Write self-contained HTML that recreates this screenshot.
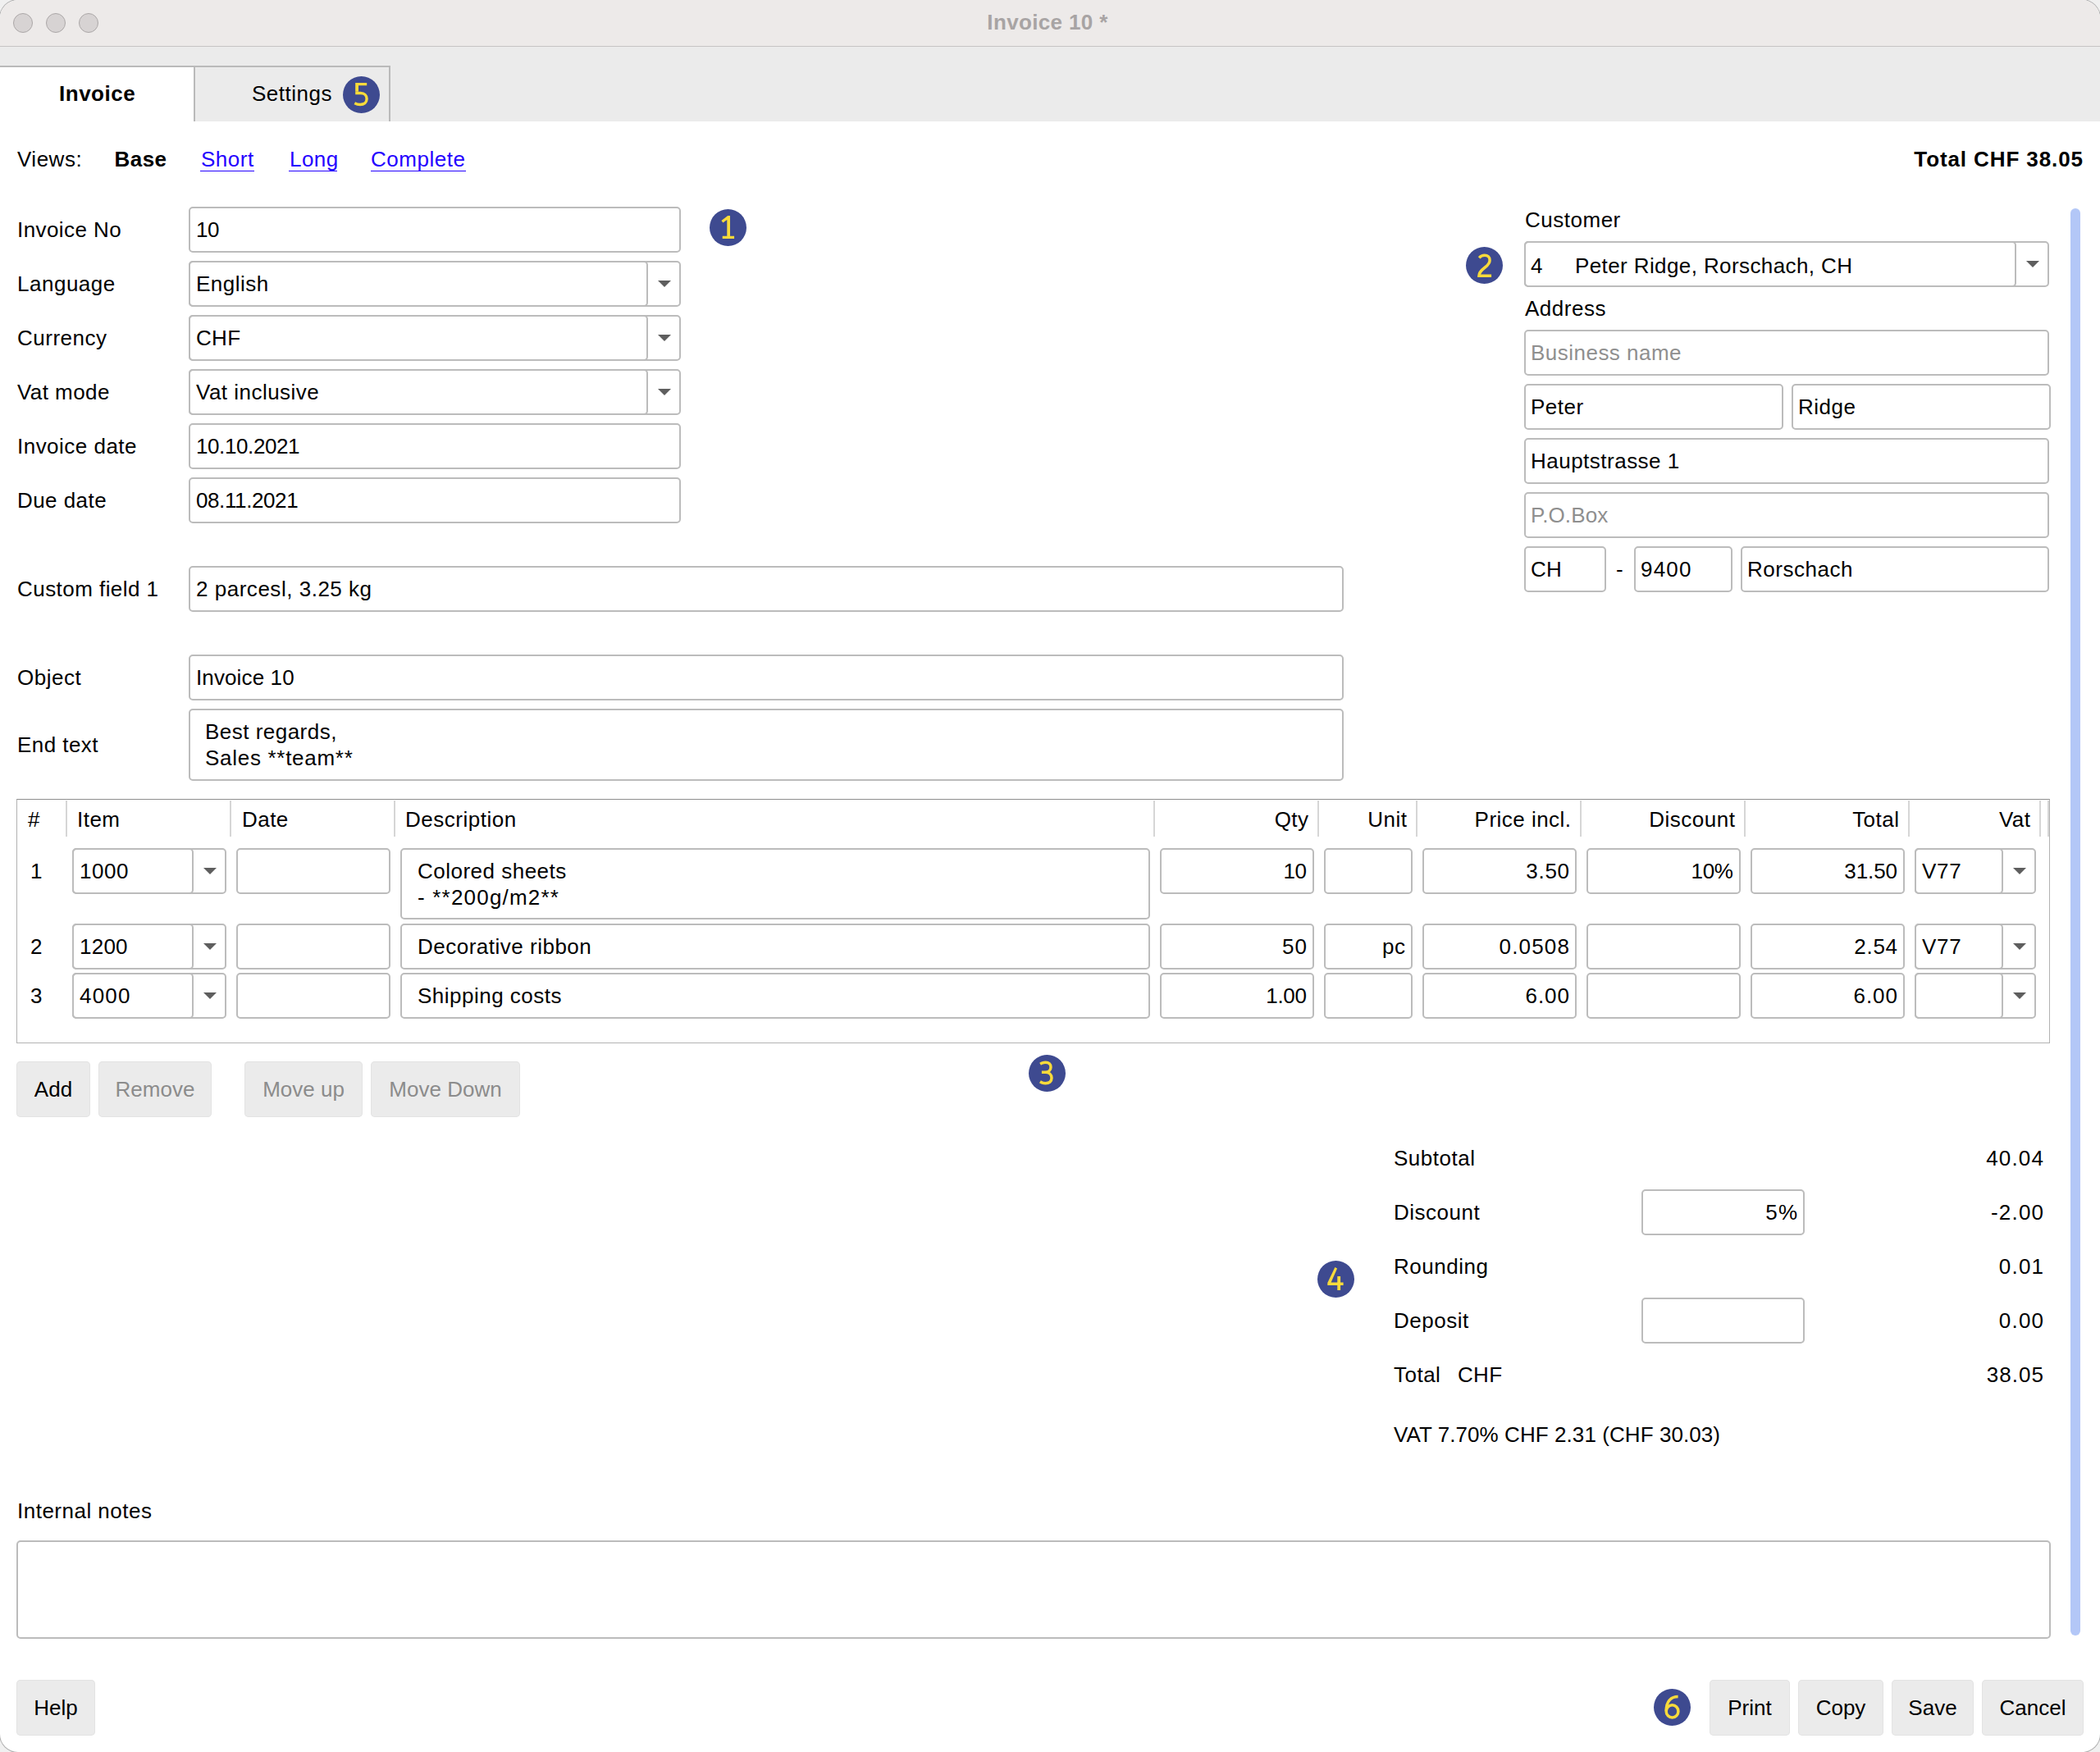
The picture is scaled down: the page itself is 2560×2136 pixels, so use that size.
<!DOCTYPE html>
<html><head><meta charset="utf-8"><style>
html,body{margin:0;padding:0;width:2560px;height:2136px;overflow:hidden;background:#f0f0f0;}
body{font-family:"Liberation Sans",sans-serif;font-size:26px;color:#000;position:relative;}
#win{position:absolute;left:0;top:0;width:2560px;height:2136px;background:#fff;border-radius:22px;overflow:hidden;box-shadow:0 0 0 1px #b0b0b0;}
.t{position:absolute;white-space:pre;}
.inp{position:absolute;box-sizing:border-box;border:2px solid #bcbcbc;border-radius:5px;background:#fff;}
.btn{position:absolute;box-sizing:border-box;background:#ebebeb;border-radius:5px;box-shadow:inset 0 0 0 1px #e3e3e3;}
.vl{position:absolute;width:2px;background:#b9b9b9;}
.arr{position:absolute;width:0;height:0;border-left:8px solid transparent;border-right:8px solid transparent;border-top:8px solid #5e5e5e;}
.mk{position:absolute;width:45px;height:45px;}
.mk svg{display:block;}
#titlebar{position:absolute;left:0;top:0;width:2560px;height:56px;background:#edeae9;border-bottom:1px solid #c6c4c4;}
.tl{position:absolute;width:22px;height:22px;border-radius:50%;background:#d7d3d3;border:1px solid #aba7a7;}
#tabbar{position:absolute;left:0;top:57px;width:2560px;height:91px;background:#ebebeb;}
#tabsel{position:absolute;left:0;top:80px;width:237px;height:68px;background:#fff;border-top:2px solid #bababa;box-sizing:border-box;}
#tab2{position:absolute;left:236px;top:80px;width:240px;height:68px;background:#ebebeb;border:2px solid #bababa;border-bottom:none;box-sizing:border-box;}
#sb{position:absolute;left:2524px;top:254px;width:12px;height:1740px;border-radius:6px;background:#b3c7f7;}
#tbl{position:absolute;left:20px;top:974px;width:2479px;height:298px;box-sizing:border-box;border:1px solid #b2b2b2;border-top-color:#8e8e8e;}
.hs{position:absolute;top:976px;width:2px;height:44px;background:#d6d6d6;}
</style></head><body><div id="win">
<div id="titlebar"></div>
<div class="tl" style="left:16px;top:16px"></div>
<div class="tl" style="left:56px;top:16px"></div>
<div class="tl" style="left:96px;top:16px"></div>
<div class="t" style="left:-3px;width:2560px;text-align:center;top:12px;line-height:30px;font-weight:bold;color:#a8a4a4;letter-spacing:0.35px">Invoice 10 *</div>
<div id="tabbar"></div>
<div id="tabsel"></div>
<div id="tab2"></div>
<div class="t" style="left:72px;top:99.49px;line-height:31px;font-weight:bold;letter-spacing:0.51px;">Invoice</div>
<div class="t" style="left:307px;top:99.49px;line-height:31px;letter-spacing:0.51px;">Settings</div>
<div class="mk" style="left:418.0px;top:93.0px"><svg width="45" height="45" viewBox="0 0 45 45"><circle cx="22.5" cy="22.5" r="22.5" fill="#3e4a90"/><path fill="#f8da3b" d="M15.2 8 H29.2 V11.2 H19 V18.8 H15.2 Z"/><path fill="none" stroke="#f8da3b" stroke-width="3.4" d="M15.2 20.45 H21.5 C26.2 20.45 29.1 23.5 29.1 27.6 C29.1 31.8 25.8 34.5 21.1 34.5 C18.4 34.5 16.2 33.8 14.3 32.8"/></svg></div>
<div class="t" style="left:21px;top:178.99px;line-height:31px;letter-spacing:0.50px;">Views:</div>
<div class="t" style="left:139.5px;top:178.99px;line-height:31px;font-weight:bold;letter-spacing:0.47px;">Base</div>
<div class="t" style="left:245px;top:178.99px;line-height:31px;color:#2400ff;letter-spacing:0.49px;">Short</div>
<div class="t" style="left:353px;top:178.99px;line-height:31px;color:#2400ff;letter-spacing:0.47px;">Long</div>
<div class="t" style="left:452px;top:178.99px;line-height:31px;color:#2400ff;letter-spacing:0.51px;">Complete</div>
<div style="position:absolute;left:244px;top:208px;width:66px;height:1px;background:#2400ff"></div>
<div style="position:absolute;left:352px;top:208px;width:59px;height:1px;background:#2400ff"></div>
<div style="position:absolute;left:452px;top:208px;width:116px;height:1px;background:#2400ff"></div>
<div class="t" style="right:20.10px;top:179.49px;line-height:31px;font-weight:bold;letter-spacing:0.90px;">Total CHF 38.05</div>
<div class="inp" style="left:230px;top:252px;width:600px;height:56px;"></div>
<div class="t" style="left:21px;top:265.49px;line-height:31px;letter-spacing:0.43px;">Invoice No</div>
<div class="t" style="left:239px;top:265.49px;line-height:31px;letter-spacing:-0.50px;">10</div>
<div class="inp" style="left:230px;top:318px;width:600px;height:56px;"></div>
<div class="inp" style="left:230px;top:318px;width:560px;height:56px;background:transparent;"></div>
<div class="arr" style="left:802px;top:342px"></div>
<div class="t" style="left:21px;top:331.49px;line-height:31px;letter-spacing:0.51px;">Language</div>
<div class="t" style="left:239px;top:331.49px;line-height:31px;letter-spacing:0.51px;">English</div>
<div class="inp" style="left:230px;top:384px;width:600px;height:56px;"></div>
<div class="inp" style="left:230px;top:384px;width:560px;height:56px;background:transparent;"></div>
<div class="arr" style="left:802px;top:408px"></div>
<div class="t" style="left:21px;top:397.49px;line-height:31px;letter-spacing:0.51px;">Currency</div>
<div class="t" style="left:239px;top:397.49px;line-height:31px;letter-spacing:0.30px;">CHF</div>
<div class="inp" style="left:230px;top:450px;width:600px;height:56px;"></div>
<div class="inp" style="left:230px;top:450px;width:560px;height:56px;background:transparent;"></div>
<div class="arr" style="left:802px;top:474px"></div>
<div class="t" style="left:21px;top:463.49px;line-height:31px;letter-spacing:0.44px;">Vat mode</div>
<div class="t" style="left:239px;top:463.49px;line-height:31px;letter-spacing:0.48px;">Vat inclusive</div>
<div class="inp" style="left:230px;top:516px;width:600px;height:56px;"></div>
<div class="t" style="left:21px;top:529.49px;line-height:31px;letter-spacing:0.48px;">Invoice date</div>
<div class="t" style="left:239px;top:529.49px;line-height:31px;letter-spacing:-0.40px;">10.10.2021</div>
<div class="inp" style="left:230px;top:582px;width:600px;height:56px;"></div>
<div class="t" style="left:21px;top:595.49px;line-height:31px;letter-spacing:0.44px;">Due date</div>
<div class="t" style="left:239px;top:595.49px;line-height:31px;letter-spacing:-0.40px;">08.11.2021</div>
<div class="mk" style="left:865.0px;top:255.0px"><svg width="45" height="45" viewBox="0 0 45 45"><circle cx="22.5" cy="22.5" r="22.5" fill="#3e4a90"/><path fill="#f8da3b" d="M14.4 13.9 L22.2 8 H25 V32.8 H30.05 V36 H15.7 V32.8 H21.3 V12.9 L16.4 16.6 Z"/></svg></div>
<div class="inp" style="left:230px;top:690px;width:1408px;height:56px;"></div>
<div class="t" style="left:21px;top:703.49px;line-height:31px;letter-spacing:0.45px;">Custom field 1</div>
<div class="t" style="left:239px;top:703.49px;line-height:31px;letter-spacing:0.52px;">2 parcesl, 3.25 kg</div>
<div class="inp" style="left:230px;top:798px;width:1408px;height:56px;"></div>
<div class="t" style="left:21px;top:811.49px;line-height:31px;letter-spacing:0.50px;">Object</div>
<div class="t" style="left:239px;top:811.49px;line-height:31px;letter-spacing:0.12px;">Invoice 10</div>
<div class="inp" style="left:230px;top:864px;width:1408px;height:88px;"></div>
<div class="t" style="left:21px;top:893.49px;line-height:31px;letter-spacing:0.44px;">End text</div>
<div class="t" style="left:250px;top:877.49px;line-height:31px;letter-spacing:0.48px;">Best regards,</div>
<div class="t" style="left:250px;top:909.49px;line-height:31px;letter-spacing:0.71px;">Sales **team**</div>
<div class="t" style="left:1859px;top:253.49px;line-height:31px;letter-spacing:0.51px;">Customer</div>
<div class="inp" style="left:1858px;top:294px;width:640px;height:56px;"></div>
<div class="inp" style="left:1858px;top:294px;width:600px;height:56px;background:transparent;"></div>
<div class="arr" style="left:2470px;top:318px"></div>
<div class="t" style="left:1866px;top:309.49px;line-height:31px;">4</div>
<div class="t" style="left:1920px;top:309.49px;line-height:31px;letter-spacing:0.40px;">Peter Ridge, Rorschach, CH</div>
<div class="mk" style="left:1786.5px;top:300.5px"><svg width="45" height="45" viewBox="0 0 45 45"><circle cx="22.5" cy="22.5" r="22.5" fill="#3e4a90"/><path fill="none" stroke="#f8da3b" stroke-width="3.5" stroke-linejoin="miter" d="M16.2 13.4 C18 11.3 20.2 10.3 22.8 10.3 C26.6 10.3 29.1 12.6 29.1 16.2 C29.1 19.6 27.2 22 23.3 25 C18.6 28.6 15.9 31.2 15.9 35.3 H31.1"/></svg></div>
<div class="t" style="left:1859px;top:360.99px;line-height:31px;letter-spacing:0.51px;">Address</div>
<div class="inp" style="left:1858px;top:402px;width:640px;height:56px;"></div>
<div class="t" style="left:1866px;top:415.49px;line-height:31px;color:#8f8f8f;letter-spacing:0.48px;">Business name</div>
<div class="inp" style="left:1858px;top:468px;width:316px;height:56px;"></div>
<div class="t" style="left:1866px;top:481.49px;line-height:31px;letter-spacing:0.49px;">Peter</div>
<div class="inp" style="left:2184px;top:468px;width:316px;height:56px;"></div>
<div class="t" style="left:2192px;top:481.49px;line-height:31px;letter-spacing:0.49px;">Ridge</div>
<div class="inp" style="left:1858px;top:534px;width:640px;height:56px;"></div>
<div class="t" style="left:1866px;top:547.49px;line-height:31px;letter-spacing:0.49px;">Hauptstrasse 1</div>
<div class="inp" style="left:1858px;top:600px;width:640px;height:56px;"></div>
<div class="t" style="left:1866px;top:613.49px;line-height:31px;color:#8f8f8f;letter-spacing:0.14px;">P.O.Box</div>
<div class="inp" style="left:1858px;top:666px;width:100px;height:56px;"></div>
<div class="t" style="left:1866px;top:679.49px;line-height:31px;letter-spacing:0.30px;">CH</div>
<div class="t" style="left:1970px;top:679.49px;line-height:31px;">-</div>
<div class="inp" style="left:1992px;top:666px;width:120px;height:56px;"></div>
<div class="t" style="left:2000px;top:679.49px;line-height:31px;letter-spacing:1.20px;">9400</div>
<div class="inp" style="left:2122px;top:666px;width:376px;height:56px;"></div>
<div class="t" style="left:2130px;top:679.49px;line-height:31px;letter-spacing:0.52px;">Rorschach</div>
<div id="sb"></div>
<div id="tbl"></div>
<div class="hs" style="left:80px"></div>
<div class="hs" style="left:280px"></div>
<div class="hs" style="left:480px"></div>
<div class="hs" style="left:1406px"></div>
<div class="hs" style="left:1606px"></div>
<div class="hs" style="left:1726px"></div>
<div class="hs" style="left:1926px"></div>
<div class="hs" style="left:2126px"></div>
<div class="hs" style="left:2326px"></div>
<div class="hs" style="left:2486px"></div>
<div class="hs" style="left:2496px"></div>
<div class="t" style="left:34px;top:984.49px;line-height:31px;">#</div>
<div class="t" style="left:94px;top:984.49px;line-height:31px;letter-spacing:0.47px;">Item</div>
<div class="t" style="left:295px;top:984.49px;line-height:31px;letter-spacing:0.47px;">Date</div>
<div class="t" style="left:494px;top:984.49px;line-height:31px;letter-spacing:0.52px;">Description</div>
<div class="t" style="right:964.58px;top:984.49px;line-height:31px;letter-spacing:0.43px;">Qty</div>
<div class="t" style="right:844.53px;top:984.49px;line-height:31px;letter-spacing:0.47px;">Unit</div>
<div class="t" style="right:644.53px;top:984.49px;line-height:31px;letter-spacing:0.47px;">Price incl.</div>
<div class="t" style="right:444.49px;top:984.49px;line-height:31px;letter-spacing:0.51px;">Discount</div>
<div class="t" style="right:244.51px;top:984.49px;line-height:31px;letter-spacing:0.49px;">Total</div>
<div class="t" style="right:84.58px;top:984.49px;line-height:31px;letter-spacing:0.43px;">Vat</div>
<div class="t" style="left:37px;top:1047.49px;line-height:31px;">1</div>
<div class="inp" style="left:88px;top:1034px;width:188px;height:56px;"></div>
<div class="inp" style="left:88px;top:1034px;width:148px;height:56px;background:transparent;"></div>
<div class="arr" style="left:248px;top:1058px"></div>
<div class="t" style="left:97px;top:1047.49px;line-height:31px;letter-spacing:0.50px;">1000</div>
<div class="inp" style="left:288px;top:1034px;width:188px;height:56px;"></div>
<div class="inp" style="left:488px;top:1034px;width:914px;height:87px;"></div>
<div class="t" style="left:509px;top:1047.49px;line-height:31px;letter-spacing:0.49px;">Colored sheets</div>
<div class="t" style="left:509px;top:1078.99px;line-height:31px;letter-spacing:1.20px;">- **200g/m2**</div>
<div class="inp" style="left:1414px;top:1034px;width:188px;height:56px;"></div>
<div class="t" style="right:967.50px;top:1047.49px;line-height:31px;letter-spacing:-0.50px;">10</div>
<div class="inp" style="left:1614px;top:1034px;width:108px;height:56px;"></div>
<div class="t" style="right:847.00px;top:1047.49px;line-height:31px;"></div>
<div class="inp" style="left:1734px;top:1034px;width:188px;height:56px;"></div>
<div class="t" style="right:646.30px;top:1047.49px;line-height:31px;letter-spacing:0.70px;">3.50</div>
<div class="inp" style="left:1934px;top:1034px;width:188px;height:56px;"></div>
<div class="t" style="right:447.25px;top:1047.49px;line-height:31px;letter-spacing:-0.25px;">10%</div>
<div class="inp" style="left:2134px;top:1034px;width:188px;height:56px;"></div>
<div class="t" style="right:247.10px;top:1047.49px;line-height:31px;letter-spacing:-0.10px;">31.50</div>
<div class="inp" style="left:2334px;top:1034px;width:148px;height:56px;"></div>
<div class="inp" style="left:2334px;top:1034px;width:108px;height:56px;background:transparent;"></div>
<div class="arr" style="left:2454px;top:1058px"></div>
<div class="t" style="left:2343px;top:1047.49px;line-height:31px;letter-spacing:0.75px;">V77</div>
<div class="t" style="left:37px;top:1139.49px;line-height:31px;">2</div>
<div class="inp" style="left:88px;top:1126px;width:188px;height:56px;"></div>
<div class="inp" style="left:88px;top:1126px;width:148px;height:56px;background:transparent;"></div>
<div class="arr" style="left:248px;top:1150px"></div>
<div class="t" style="left:97px;top:1139.49px;line-height:31px;letter-spacing:0.23px;">1200</div>
<div class="inp" style="left:288px;top:1126px;width:188px;height:56px;"></div>
<div class="inp" style="left:488px;top:1126px;width:914px;height:56px;"></div>
<div class="t" style="left:509px;top:1139.49px;line-height:31px;letter-spacing:0.50px;">Decorative ribbon</div>
<div class="inp" style="left:1414px;top:1126px;width:188px;height:56px;"></div>
<div class="t" style="right:965.80px;top:1139.49px;line-height:31px;letter-spacing:1.20px;">50</div>
<div class="inp" style="left:1614px;top:1126px;width:108px;height:56px;"></div>
<div class="t" style="right:846.45px;top:1139.49px;line-height:31px;letter-spacing:0.55px;">pc</div>
<div class="inp" style="left:1734px;top:1126px;width:188px;height:56px;"></div>
<div class="t" style="right:645.80px;top:1139.49px;line-height:31px;letter-spacing:1.20px;">0.0508</div>
<div class="inp" style="left:1934px;top:1126px;width:188px;height:56px;"></div>
<div class="t" style="right:447.00px;top:1139.49px;line-height:31px;"></div>
<div class="inp" style="left:2134px;top:1126px;width:188px;height:56px;"></div>
<div class="t" style="right:246.30px;top:1139.49px;line-height:31px;letter-spacing:0.70px;">2.54</div>
<div class="inp" style="left:2334px;top:1126px;width:148px;height:56px;"></div>
<div class="inp" style="left:2334px;top:1126px;width:108px;height:56px;background:transparent;"></div>
<div class="arr" style="left:2454px;top:1150px"></div>
<div class="t" style="left:2343px;top:1139.49px;line-height:31px;letter-spacing:0.75px;">V77</div>
<div class="t" style="left:37px;top:1199.49px;line-height:31px;">3</div>
<div class="inp" style="left:88px;top:1186px;width:188px;height:56px;"></div>
<div class="inp" style="left:88px;top:1186px;width:148px;height:56px;background:transparent;"></div>
<div class="arr" style="left:248px;top:1210px"></div>
<div class="t" style="left:97px;top:1199.49px;line-height:31px;letter-spacing:1.20px;">4000</div>
<div class="inp" style="left:288px;top:1186px;width:188px;height:56px;"></div>
<div class="inp" style="left:488px;top:1186px;width:914px;height:56px;"></div>
<div class="t" style="left:509px;top:1199.49px;line-height:31px;letter-spacing:0.49px;">Shipping costs</div>
<div class="inp" style="left:1414px;top:1186px;width:188px;height:56px;"></div>
<div class="t" style="right:967.27px;top:1199.49px;line-height:31px;letter-spacing:-0.27px;">1.00</div>
<div class="inp" style="left:1614px;top:1186px;width:108px;height:56px;"></div>
<div class="t" style="right:847.00px;top:1199.49px;line-height:31px;"></div>
<div class="inp" style="left:1734px;top:1186px;width:188px;height:56px;"></div>
<div class="t" style="right:646.03px;top:1199.49px;line-height:31px;letter-spacing:0.97px;">6.00</div>
<div class="inp" style="left:1934px;top:1186px;width:188px;height:56px;"></div>
<div class="t" style="right:447.00px;top:1199.49px;line-height:31px;"></div>
<div class="inp" style="left:2134px;top:1186px;width:188px;height:56px;"></div>
<div class="t" style="right:246.03px;top:1199.49px;line-height:31px;letter-spacing:0.97px;">6.00</div>
<div class="inp" style="left:2334px;top:1186px;width:148px;height:56px;"></div>
<div class="inp" style="left:2334px;top:1186px;width:108px;height:56px;background:transparent;"></div>
<div class="arr" style="left:2454px;top:1210px"></div>
<div class="t" style="left:2343px;top:1199.49px;line-height:31px;"></div>
<div class="btn" style="left:20px;top:1294px;width:90px;height:68px;"></div>
<div class="t" style="left:20px;width:90px;text-align:center;top:1312.5px;line-height:30px;">Add</div>
<div class="btn" style="left:120px;top:1294px;width:138px;height:68px;"></div>
<div class="t" style="left:120px;width:138px;text-align:center;top:1312.5px;line-height:30px;color:#8c8c8c;">Remove</div>
<div class="btn" style="left:298px;top:1294px;width:144px;height:68px;"></div>
<div class="t" style="left:298px;width:144px;text-align:center;top:1312.5px;line-height:30px;color:#8c8c8c;">Move up</div>
<div class="btn" style="left:452px;top:1294px;width:182px;height:68px;"></div>
<div class="t" style="left:452px;width:182px;text-align:center;top:1312.5px;line-height:30px;color:#8c8c8c;">Move Down</div>
<div class="mk" style="left:1254.0px;top:1286.0px"><svg width="45" height="45" viewBox="0 0 45 45"><circle cx="22.5" cy="22.5" r="22.5" fill="#3e4a90"/><path fill="none" stroke="#f8da3b" stroke-width="3.5" d="M14.1 11.2 C16 10 18.3 9.25 20.7 9.25 C24.6 9.25 27 11.6 27 15 C27 18.6 24.2 21.3 20 21.3 H15.9 M20 21.3 C25 21.3 28 24.2 28 28.3 C28 32.4 24.9 34.7 20.6 34.7 C18.2 34.7 15.9 34 13.9 32.7"/></svg></div>
<div class="t" style="left:1777px;top:1661.49px;line-height:31px;letter-spacing:0.30px;">CHF</div>
<div class="t" style="left:1699px;top:1397.49px;line-height:31px;letter-spacing:0.51px;">Subtotal</div>
<div class="t" style="right:67.80px;top:1397.49px;line-height:31px;letter-spacing:1.20px;">40.04</div>
<div class="t" style="left:1699px;top:1463.49px;line-height:31px;letter-spacing:0.51px;">Discount</div>
<div class="t" style="right:67.80px;top:1463.49px;line-height:31px;letter-spacing:1.20px;">-2.00</div>
<div class="t" style="left:1699px;top:1529.49px;line-height:31px;letter-spacing:0.51px;">Rounding</div>
<div class="t" style="right:67.80px;top:1529.49px;line-height:31px;letter-spacing:1.20px;">0.01</div>
<div class="t" style="left:1699px;top:1595.49px;line-height:31px;letter-spacing:0.51px;">Deposit</div>
<div class="t" style="right:67.80px;top:1595.49px;line-height:31px;letter-spacing:1.20px;">0.00</div>
<div class="t" style="left:1699px;top:1661.49px;line-height:31px;letter-spacing:0.49px;">Total</div>
<div class="t" style="right:67.97px;top:1661.49px;line-height:31px;letter-spacing:1.02px;">38.05</div>
<div class="inp" style="left:2001px;top:1450px;width:199px;height:56px;"></div>
<div class="t" style="right:367.80px;top:1463.49px;line-height:31px;letter-spacing:1.20px;">5%</div>
<div class="inp" style="left:2001px;top:1582px;width:199px;height:56px;"></div>
<div class="t" style="left:1699px;top:1734.49px;line-height:31px;letter-spacing:0.07px;">VAT 7.70% CHF 2.31 (CHF 30.03)</div>
<div class="mk" style="left:1606.0px;top:1536.5px"><svg width="45" height="45" viewBox="0 0 45 45"><circle cx="22.5" cy="22.5" r="22.5" fill="#3e4a90"/><path fill="#f8da3b" d="M21.4 8 L24.1 9.5 L16.6 26.5 H24.3 V18.9 H28.1 V26.5 H31.6 V29.9 H28.1 V36 H24.3 V29.9 H12.3 V27 Z"/></svg></div>
<div class="t" style="left:21px;top:1827.49px;line-height:31px;letter-spacing:0.49px;">Internal notes</div>
<div class="inp" style="left:20px;top:1878px;width:2480px;height:120px;"></div>
<div class="btn" style="left:20px;top:2048px;width:96px;height:68px;"></div>
<div class="t" style="left:20px;width:96px;text-align:center;top:2066.5px;line-height:30px;">Help</div>
<div class="btn" style="left:2084px;top:2048px;width:98px;height:68px;"></div>
<div class="t" style="left:2084px;width:98px;text-align:center;top:2066.5px;line-height:30px;">Print</div>
<div class="btn" style="left:2192px;top:2048px;width:104px;height:68px;"></div>
<div class="t" style="left:2192px;width:104px;text-align:center;top:2066.5px;line-height:30px;">Copy</div>
<div class="btn" style="left:2306px;top:2048px;width:100px;height:68px;"></div>
<div class="t" style="left:2306px;width:100px;text-align:center;top:2066.5px;line-height:30px;">Save</div>
<div class="btn" style="left:2416px;top:2048px;width:124px;height:68px;"></div>
<div class="t" style="left:2416px;width:124px;text-align:center;top:2066.5px;line-height:30px;">Cancel</div>
<div class="mk" style="left:2015.5px;top:2059.0px"><svg width="45" height="45" viewBox="0 0 45 45"><circle cx="22.5" cy="22.5" r="22.5" fill="#3e4a90"/><path fill="none" stroke="#f8da3b" stroke-width="3.5" d="M29.6 9.5 C21.5 9.5 15.2 14.5 15.2 27"/><ellipse cx="22.55" cy="27.4" rx="7.35" ry="7.6" fill="none" stroke="#f8da3b" stroke-width="3.5"/></svg></div>
</div></body></html>
